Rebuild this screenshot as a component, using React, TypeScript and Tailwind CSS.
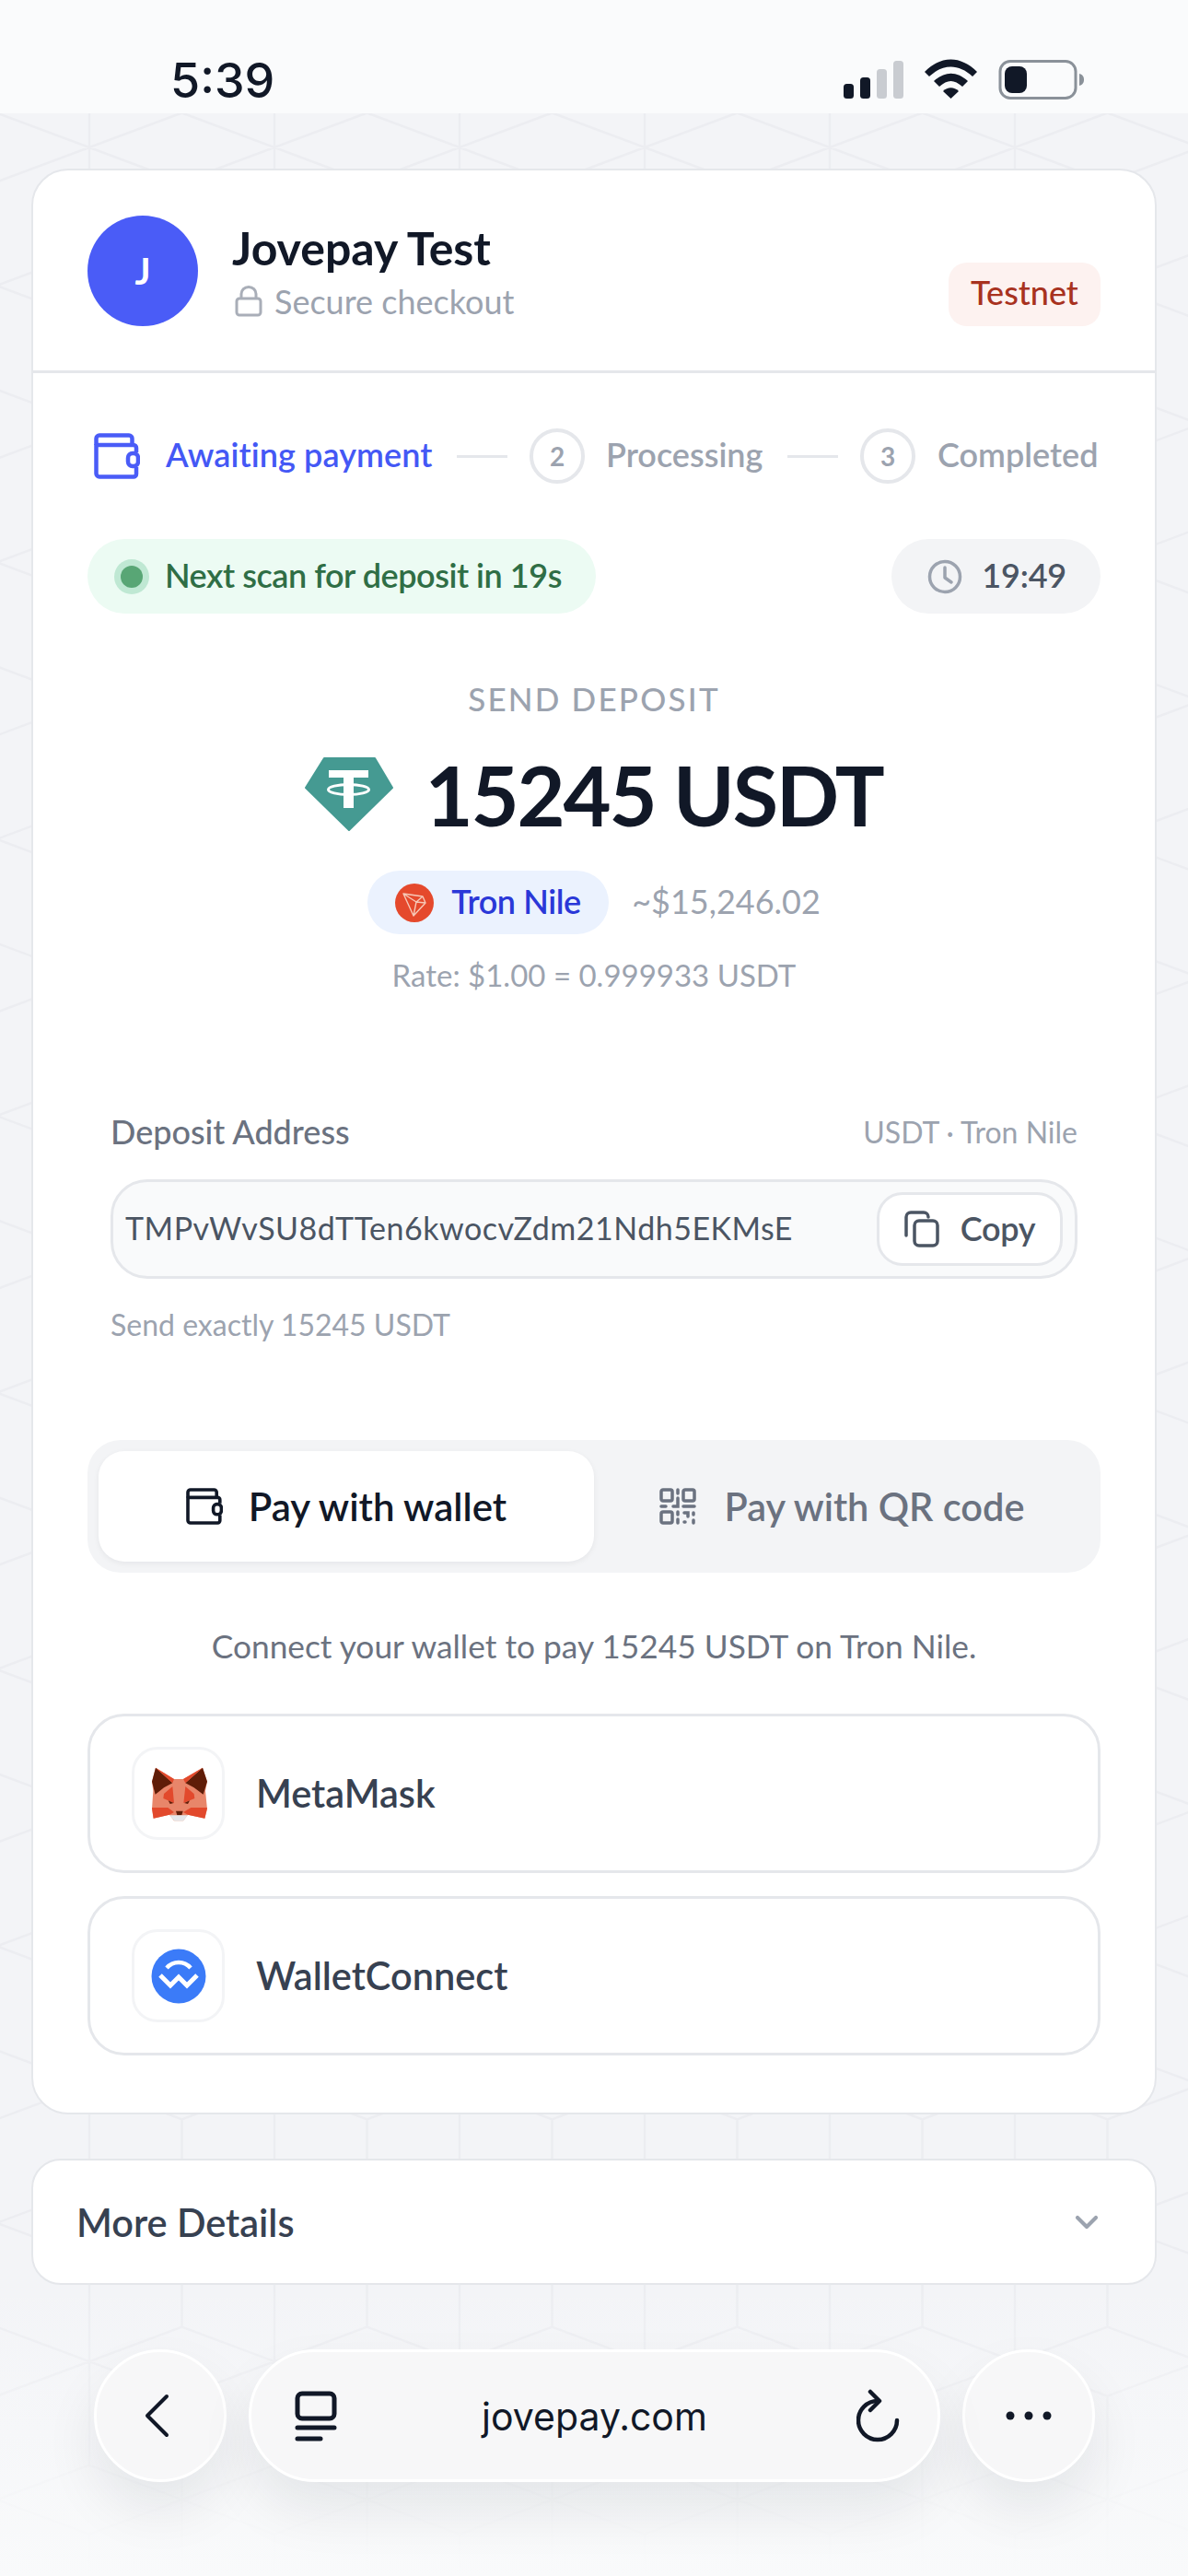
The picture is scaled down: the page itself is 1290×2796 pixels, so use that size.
import { ChevronDown } from "lucide-react";

const font = { fontFamily: '"Lato", "Noto Sans", sans-serif' };

// hex-ish lattice behind the page
function buildPattern() {
    const w = 201;
    const h = 300.4;
    let d = "";
    for (let m = -1; m < 11; m++) {
        for (let k = -1; k < 8; k++) {
            for (const [x, y] of [
                [97 + k * w, 160 + m * h],
                [-3.5 + k * w, 310 + m * h],
            ]) {
                d += `M${x - 100.5} ${y - 37.5}L${x + 100.5} ${y + 37.5}`;
                d += `M${x + 100.5} ${y - 37.5}L${x - 100.5} ${y + 37.5}`;
                d += `M${x} ${y - 113}L${x} ${y + 113}`;
            }
        }
    }
    return d;
}

function Background() {
    return (
        <div className="absolute inset-0 bg-[#f3f4f7]">
            <svg width="1290" height="2796" className="absolute inset-0">
                <path d={buildPattern()} fill="none" stroke="#ecedf1" strokeWidth="2.5" />
            </svg>
            <div className="absolute left-0 right-0 top-[2480px] h-[316px] bg-gradient-to-b from-transparent to-[#f9fafb]" />
        </div>
    );
}

function StatusBar() {
    return (
        <div className="relative h-[123px] bg-[#fafbfc]">
            <span
                className="absolute left-[185px] top-[58px] text-[52px] leading-[60px] font-medium text-[#111827]"
                style={{ fontFamily: "Inter, sans-serif" }}
            >
                5:39
            </span>
            <svg className="absolute left-[880px] top-[40px]" width="340" height="100" viewBox="0 0 340 100">
                <rect x="36" y="51" width="11" height="16" rx="3.5" fill="#111827" />
                <rect x="54" y="44" width="11" height="23" rx="3.5" fill="#111827" />
                <rect x="72" y="35" width="11" height="32" rx="3.5" fill="#c9ccd1" />
                <rect x="90" y="26" width="11" height="41" rx="3.5" fill="#c9ccd1" />
                <path d="M124 38 C142 20 163 20 181 38 L176 43 C161 29 144 29 129 43 Z" fill="#111827" />
                <path d="M134 48 C146 37 159 37 171 48 L165 54 C156 46 149 46 140 54 Z" fill="#111827" />
                <path d="M144 59 C149 54 156 54 161 59 L152.5 67 Z" fill="#111827" />
                <rect x="206" y="26.5" width="82" height="40" rx="11" fill="none" stroke="#8a9199" strokeWidth="3" />
                <rect x="211" y="32" width="24" height="29" rx="8" fill="#111827" />
                <path d="M292 40 C296 41 297 44 297 46.5 C297 49 296 52 292 53 Z" fill="#8a9199" />
            </svg>
        </div>
    );
}

function WalletIcon({ className, stroke }: { className: string; stroke: string }) {
    return (
        <svg className={className} viewBox="0 0 50 50" fill="none" stroke={stroke} strokeWidth="4.5" strokeLinejoin="round">
            <path d="M2.5 12 V44 a3.5 3.5 0 0 0 3.5 3.5 H43 a3 3 0 0 0 3 -3 V37" />
            <path d="M46 21 V16 a3 3 0 0 0 -3 -3 H2.5" />
            <path d="M2.5 13 V6 a3.5 3.5 0 0 1 3.5 -3.5 H38 a3.5 3.5 0 0 1 3.5 3.5 V13" />
            <rect x="37" y="22" width="11" height="14" rx="5" />
        </svg>
    );
}

function StepCircle({ n }: { n: number }) {
    return (
        <div className="flex h-[60px] w-[60px] shrink-0 items-center justify-center rounded-full border-[4px] border-[#e5e7eb] text-[28px] font-bold text-[#9ca3af]">
            {n}
        </div>
    );
}

function Stepper() {
    return (
        <div className="flex h-[60px] items-center text-[36px] text-[#9ca3af]">
            <WalletIcon className="ml-[7px] h-[50px] w-[50px] shrink-0" stroke="#4a5cf7" />
            <span className="mb-[4px] ml-[28px] w-[291px] whitespace-nowrap font-semibold tracking-[0.1px] text-[#4458f5]">Awaiting payment</span>
            <div className="ml-[25px] h-[3px] w-[55px] bg-[#e5e7eb]" />
            <div className="ml-[24px]">
                <StepCircle n={2} />
            </div>
            <span className="mb-[4px] ml-[23px] w-[172px] whitespace-nowrap font-semibold">Processing</span>
            <div className="ml-[25px] h-[3px] w-[55px] bg-[#e5e7eb]" />
            <div className="ml-[24px]">
                <StepCircle n={3} />
            </div>
            <span className="mb-[4px] ml-[24px] whitespace-nowrap font-semibold">Completed</span>
        </div>
    );
}

function TetherIcon() {
    return (
        <svg width="96" height="80" viewBox="0 0 96 80" className="shrink-0">
            <path d="M21 1 H76 L95 33 L48 79 L1 33 Z" fill="#459a92" stroke="#459a92" strokeWidth="2" strokeLinejoin="round" />
            <path d="M26 14 H69 V22 H53 V55 H42 V22 H26 Z" fill="#fff" />
            <ellipse cx="47.5" cy="35" rx="22" ry="5.5" fill="none" stroke="#fff" strokeWidth="3" />
        </svg>
    );
}

function TronIcon() {
    return (
        <svg width="42" height="42" viewBox="0 0 42 42" className="shrink-0">
            <circle cx="21" cy="21" r="21" fill="#e5492c" />
            <path d="M9 11 L30 14 L33 21 L20 35 Z M9 11 L23 20 L20 35 M23 20 L30 14 M23 20 L33 21" fill="none" stroke="#f6c9b8" strokeWidth="1.4" strokeLinejoin="round" />
        </svg>
    );
}

function CopyIcon() {
    return (
        <svg width="38" height="40" viewBox="0 0 38 40" fill="none" stroke="#4b5563" strokeWidth="3.5" strokeLinecap="round" strokeLinejoin="round" className="shrink-0">
            <rect x="11" y="11" width="25" height="27" rx="5" />
            <path d="M2 27 V7 a5 5 0 0 1 5 -5 H21 a5 5 0 0 1 5 5" />
        </svg>
    );
}

function QrIcon() {
    return (
        <svg width="40" height="40" viewBox="0 0 40 40" fill="none" stroke="#6b7280" strokeWidth="3.5" strokeLinecap="round" className="shrink-0">
            <rect x="2" y="2" width="12" height="12" rx="2" />
            <rect x="26" y="2" width="12" height="12" rx="2" />
            <rect x="2" y="26" width="12" height="12" rx="2" />
            <path d="M20 2 V6 M20 11 V20 H15 M2 20 H7 M26 20 H38 M20 26 V29 M20 34 V38 M27 27 H31 V31 M37 27 V29 M27 37 H28 M37 35 V38" />
        </svg>
    );
}

function FoxIcon() {
    return (
        <svg width="80" height="80" viewBox="0 0 240 240">
            <path d="M33 80 L45 35 L105 72 H135 L198 35 L213 80 L207 110 L213 170 L205 200 L150 188 L135 208 H105 L90 188 L38 200 L33 170 L37 110 Z" fill="#e8866a" />
            <path d="M45 35 L100 85 L72 100 L44 122 L33 80 Z" fill="#5f1d08" />
            <path d="M198 35 L142 85 L170 100 L200 122 L213 80 Z" fill="#5f1d08" />
            <path d="M45 35 L105 72 L100 85 Z M198 35 L135 72 L142 85 Z" fill="#e2492c" />
            <path d="M72 120 L100 96 L105 150 L70 135 Z M170 120 L142 96 L136 150 L172 135 Z" fill="#e2492c" />
            <path d="M33 165 L85 165 L105 180 L90 188 L38 200 Z M213 165 L160 165 L135 180 L150 188 L205 200 Z" fill="#e2492c" />
            <path d="M86 142 L104 150 L92 153 Z M156 142 L138 150 L150 153 Z" fill="#5f1d08" />
            <path d="M111 176 H134 L130 190 H115 Z" fill="#5f1d08" />
            <path d="M90 190 L113 190 H132 L150 190 L135 208 H106 Z" fill="#e4e7eb" />
        </svg>
    );
}

function WalletConnectIcon() {
    return (
        <svg width="60" height="60" viewBox="0 0 60 60">
            <circle cx="30" cy="30" r="29.5" fill="#3b7bf8" />
            <path d="M17 21 C24 13 36 13 43 21" fill="none" stroke="#fff" strokeWidth="4.5" />
            <path d="M10 29 L21 40 L30 31 L39 40 L50 29" fill="none" stroke="#fff" strokeWidth="5" />
        </svg>
    );
}

function WalletRow({ icon, name }: { icon: React.ReactNode; name: string }) {
    return (
        <div className="flex h-[173px] items-center rounded-[40px] border-[3px] border-[#e5e7eb] bg-white pl-[45px]">
            <div className="flex h-[101px] w-[101px] items-center justify-center rounded-[28px] border-[3px] border-[#f3f4f6]">
                {icon}
            </div>
            <span className="ml-[34px] text-[41.5px] font-semibold text-[#374151]">{name}</span>
        </div>
    );
}

function BrowserBar() {
    const circle = "flex h-[144px] w-[144px] items-center justify-center rounded-full border-[3px] border-white bg-[#f7f7f8] shadow-[0_30px_60px_rgba(17,24,39,0.08)]";
    return (
        <div className="absolute left-[102px] top-[2550px] flex gap-[24px]">
            <div className={circle}>
                <svg className="mr-[8px]" width="28" height="48" viewBox="0 0 28 48" fill="none" stroke="#111827" strokeWidth="4" strokeLinecap="round" strokeLinejoin="round">
                    <path d="M25 3 L4 24 L25 45" />
                </svg>
            </div>
            <div className="relative flex h-[144px] w-[751px] items-center justify-center rounded-[72px] border-[3px] border-white bg-[#f7f7f8] shadow-[0_30px_60px_rgba(17,24,39,0.08)]">
                <svg className="absolute left-[47px] top-[42px]" width="46" height="56" viewBox="0 0 46 56" fill="none" stroke="#111827" strokeWidth="5" strokeLinecap="round" strokeLinejoin="round">
                    <rect x="3" y="3" width="40" height="27" rx="5" />
                    <path d="M3 40 H43 M3 52 H28" />
                </svg>
                <span className="mt-[2px] text-[41px] leading-[50px] text-[#111827]" style={{ fontFamily: "Inter, sans-serif" }}>
                    jovepay.com
                </span>
                <svg className="absolute right-[40px] top-[40px]" width="48" height="58" viewBox="0 0 48 58" fill="none" stroke="#111827" strokeWidth="4.5" strokeLinecap="round" strokeLinejoin="round">
                    <path d="M44 34 A21 21 0 1 1 23 13" />
                    <path d="M15 3 L25 13 L15 23" />
                </svg>
            </div>
            <div className={circle}>
                <svg width="50" height="10" viewBox="0 0 50 10" fill="#111827">
                    <circle cx="5" cy="5" r="4.5" />
                    <circle cx="25" cy="5" r="4.5" />
                    <circle cx="45" cy="5" r="4.5" />
                </svg>
            </div>
        </div>
    );
}

export default function App() {
    return (
        <div className="relative h-[2796px] w-[1290px] overflow-hidden" style={font}>
            <Background />
            <div className="relative">
                <StatusBar />

                <div className="mx-[34px] mt-[60px] rounded-[40px] border-[2.5px] border-[#e5e7eb] bg-white">
                    <div className="flex h-[220px] items-end justify-between border-b-[3px] border-[#e5e7eb] px-[59px] pb-[48px]">
                        <div className="flex items-center gap-[37px]">
                            <div className="flex h-[120px] w-[120px] items-center justify-center rounded-full bg-[#4a5cf7] text-[40px] font-bold text-white">
                                J
                            </div>
                            <div>
                                <div className="text-[50px] leading-[60px] font-bold text-[#111827]">Jovepay Test</div>
                                <div className="mt-[6px] flex items-center gap-[13px] pl-[3px] text-[36px] leading-[44px] text-[#9ca3af]">
                                    <svg width="30" height="34" viewBox="0 0 30 34" fill="none" stroke="#a9aeb8" strokeWidth="3" strokeLinejoin="round">
                                        <rect x="2" y="14" width="26" height="18" rx="3" />
                                        <path d="M7 14 V9 a8 7.5 0 0 1 16 0 V14" />
                                    </svg>
                                    Secure checkout
                                </div>
                            </div>
                        </div>
                        <div className="flex h-[69px] w-[165px] items-center justify-center rounded-[20px] bg-[#fdf2f0] pb-[5px] text-[36px] font-medium text-[#a8321f]">
                            Testnet
                        </div>
                    </div>

                    <div className="px-[59px] pb-[62px]">
                        <div className="mt-[60px]">
                            <Stepper />
                        </div>

                        <div className="mt-[60px] flex h-[81px] justify-between">
                            <div className="flex items-center rounded-full bg-[#ecfbf3] pl-[29px] pr-[37px] text-[36px] font-semibold tracking-[-0.45px] whitespace-nowrap text-[#2f6e45]">
                                <div className="mr-[17px] flex h-[38px] w-[38px] items-center justify-center rounded-full bg-[#bfe8d3]">
                                    <div className="h-[24px] w-[24px] rounded-full bg-[#58a675]" />
                                </div>
                                <span className="mb-[3px]">Next scan for deposit in 19s</span>
                            </div>
                            <div className="flex items-center rounded-full bg-[#f3f4f6] pl-[39px] pr-[37px] text-[36px] font-semibold tracking-[-0.2px] text-[#4b5563]">
                                <svg className="mr-[21px]" width="38" height="40" viewBox="0 0 38 40" fill="none" stroke="#9ca3af" strokeWidth="3.5" strokeLinecap="round" strokeLinejoin="round">
                                    <circle cx="19" cy="20" r="16.5" />
                                    <path d="M19 10 V21 L26 26" />
                                </svg>
                                <span className="mb-[3px]">19:49</span>
                            </div>
                        </div>

                        <div className="mt-[72px] text-center text-[35px] leading-[40px] font-medium tracking-[2.2px] text-[#9ca3af]">SEND DEPOSIT</div>

                        <div className="mt-[34px] flex h-[100px] items-center justify-center gap-[34px]">
                            <TetherIcon />
                            <span className="text-[90px] leading-[100px] font-bold tracking-[-2.2px] text-[#111827]">15245 USDT</span>
                        </div>

                        <div className="mt-[33px] flex items-center justify-center gap-[25px]">
                            <div className="flex h-[69px] w-[262px] items-center gap-[19px] rounded-full bg-[#ebf2fe] pl-[30px] text-[36px] font-semibold tracking-[-0.4px] text-[#2a38d8]">
                                <TronIcon />
                                <span className="mb-[3px]">Tron Nile</span>
                            </div>
                            <span className="mb-[3px] text-[36px] text-[#9ca3af]">~$15,246.02</span>
                        </div>

                        <div className="mt-[24px] text-center text-[33px] leading-[40px] text-[#9ca3af]">Rate: $1.00 = 0.999933 USDT</div>

                        <div className="mt-[132px] px-[25px]">
                            <div className="flex h-[40px] items-center justify-between">
                                <span className="mb-[5px] text-[36px] font-medium text-[#6b7280]">Deposit Address</span>
                                <span className="mb-[3px] text-[32px] text-[#9ca3af]">USDT · Tron Nile</span>
                            </div>
                            <div className="mt-[30px] flex h-[108px] items-center justify-between rounded-[40px] border-[3px] border-[#e5e7eb] bg-[#f9fafb] pl-[13px] pr-[13px]">
                                <span className="mb-[3px] text-[34px] tracking-[0.5px] whitespace-nowrap text-[#4b5563]">TMPvWvSU8dTTen6kwocvZdm21Ndh5EKMsE</span>
                                <div className="flex h-[80px] w-[202px] items-center justify-center gap-[23px] rounded-[28px] border-[3px] border-[#e5e7eb] bg-white text-[36px] font-semibold tracking-[-0.3px] text-[#4b5563]">
                                    <CopyIcon />
                                    <span className="mb-[3px]">Copy</span>
                                </div>
                            </div>
                            <div className="mt-[30px] text-[32px] leading-[40px] text-[#9ca3af]">Send exactly 15245 USDT</div>
                        </div>

                        <div className="mt-[105px] flex h-[144px] rounded-[36px] bg-[#f3f4f6] p-[12px]">
                            <div className="flex w-[538px] items-center justify-center gap-[28px] rounded-[28px] bg-white text-[42px] font-semibold text-[#111827] shadow-[0_2px_6px_rgba(17,24,39,0.06)]">
                                <WalletIcon className="h-[40px] w-[40px] shrink-0" stroke="#111827" />
                                Pay with wallet
                            </div>
                            <div className="flex flex-1 items-center justify-center gap-[31px] text-[41.5px] font-semibold text-[#6b7280]">
                                <QrIcon />
                                Pay with QR code
                            </div>
                        </div>

                        <div className="mt-[58px] text-center text-[35.3px] leading-[44px] text-[#6b7280]">Connect your wallet to pay 15245 USDT on Tron Nile.</div>

                        <div className="mt-[51px] flex flex-col gap-[25px]">
                            <WalletRow icon={<FoxIcon />} name="MetaMask" />
                            <WalletRow icon={<WalletConnectIcon />} name="WalletConnect" />
                        </div>
                    </div>
                </div>

                <div className="mx-[34px] mt-[48px] flex h-[137px] items-center justify-between rounded-[32px] border-[2.5px] border-[#e5e7eb] bg-white pl-[47px] pr-[54px]">
                    <span className="mt-[2px] text-[41.5px] font-semibold text-[#374151]">More Details</span>
                    <ChevronDown size={40} color="#9ca3af" strokeWidth={2.5} />
                </div>
            </div>
            <BrowserBar />
        </div>
    );
}
